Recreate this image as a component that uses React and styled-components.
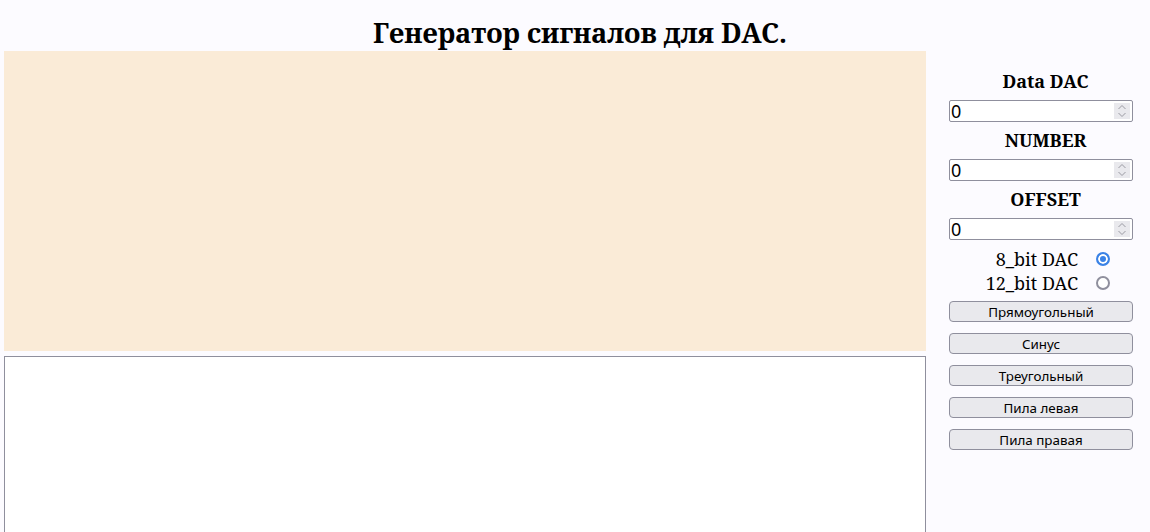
import React, { useState } from 'react';
import styled, { createGlobalStyle } from 'styled-components';

const GlobalStyle = createGlobalStyle`
  html, body {
    margin: 0;
    padding: 0;
    background: #fcfbff;
    font-family: "Noto Serif", "Liberation Serif", serif;
    overflow: hidden;
  }
`;

const Page = styled.div`
  width: 1150px;
  height: 532px;
  display: flex;
  flex-direction: column;
`;

const Title = styled.h1`
  margin: 14px 0 0 10px;
  height: 37px;
  font-size: 27px;
  font-weight: bold;
  line-height: 37px;
  text-align: center;
  color: #000;
`;

const Body = styled.div`
  display: flex;
  align-items: flex-start;
`;

const LeftCol = styled.div`
  width: 922px;
  margin-left: 4px;
  display: flex;
  flex-direction: column;
  gap: 5px;
`;

const Canvas = styled.div`
  height: 300px;
  background: #faebd7;
`;

const Log = styled.textarea`
  box-sizing: border-box;
  width: 922px;
  height: 200px;
  margin: 0;
  border: 1px solid #8f8f9d;
  background: #fff;
  resize: none;
  outline: none;
`;

const Panel = styled.div`
  width: 184px;
  margin-left: 23px;
  padding-top: 18px;
  display: flex;
  flex-direction: column;
`;

const Label = styled.div`
  height: 24px;
  margin-top: ${({ first }) => (first ? '0' : '6px')};
  padding-left: 9px;
  font-size: 18px;
  font-weight: bold;
  line-height: 24px;
  text-align: center;
  color: #000;
`;

const NumberBox = styled.div`
  box-sizing: border-box;
  height: 22px;
  margin-top: 7px;
  display: flex;
  align-items: stretch;
  border: 1px solid #8f8f9d;
  border-radius: 2px;
  background: #fff;
`;

const NumberInput = styled.input`
  flex: 1;
  min-width: 0;
  border: none;
  outline: none;
  padding: 0 0 0 1px;
  font-family: "Noto Sans", sans-serif;
  font-size: 18px;
  color: #000;
  background: transparent;
  -moz-appearance: textfield;
  &::-webkit-inner-spin-button,
  &::-webkit-outer-spin-button {
    -webkit-appearance: none;
    margin: 0;
  }
`;

const Spinner = styled.div`
  width: 16px;
  margin: 2px 2px 2px 0;
  background: #e9e9ed;
  display: flex;
  align-items: center;
  justify-content: center;
`;

const RadioRow = styled.label`
  height: 24px;
  display: flex;
  align-items: center;
  justify-content: flex-end;
  gap: 18px;
  padding-right: 23px;
  margin-top: ${({ first }) => (first ? '7px' : '0')};
  font-size: 18px;
  line-height: 24px;
  color: #000;
`;

const Radio = styled.input`
  appearance: none;
  box-sizing: border-box;
  width: 14px;
  height: 14px;
  margin: 0;
  border: 2px solid #8f8f9d;
  border-radius: 50%;
  background: #fff;

  &:checked {
    border-color: #3a82e6;
    background: #3a82e6;
    box-shadow: inset 0 0 0 2px #fff;
  }
`;

const Buttons = styled.div`
  margin-top: 6px;
  display: flex;
  flex-direction: column;
  gap: 11px;
`;

const Button = styled.button`
  height: 21px;
  padding: 0;
  border: 1px solid #8f8f9d;
  border-radius: 4px;
  background: #e9e9ed;
  font-family: "Noto Sans", sans-serif;
  font-size: 13.4px;
  color: #000;
  cursor: pointer;
`;

const SpinIcon = () => (
  <svg width="10" height="16" viewBox="0 0 10 16" fill="none" stroke="#9a9aa2" strokeWidth="1">
    <path d="M1.5 6 L5 2.5 L8.5 6" />
    <path d="M1.5 10 L5 13.5 L8.5 10" />
  </svg>
);

const NumberField = ({ value, onChange }) => (
  <NumberBox>
    <NumberInput type="number" value={value} onChange={(e) => onChange(e.target.value)} />
    <Spinner>
      <SpinIcon />
    </Spinner>
  </NumberBox>
);

export default function App() {
  const [data, setData] = useState('0');
  const [number, setNumber] = useState('0');
  const [offset, setOffset] = useState('0');
  const [bits, setBits] = useState(8);

  return (
    <Page>
      <GlobalStyle />
      <Title>Генератор сигналов для DAC.</Title>
      <Body>
        <LeftCol>
          <Canvas />
          <Log />
        </LeftCol>
        <Panel>
          <Label first>Data DAC</Label>
          <NumberField value={data} onChange={setData} />
          <Label>NUMBER</Label>
          <NumberField value={number} onChange={setNumber} />
          <Label>OFFSET</Label>
          <NumberField value={offset} onChange={setOffset} />
          <RadioRow first>
            8_bit DAC
            <Radio type="radio" name="dac" checked={bits === 8} onChange={() => setBits(8)} />
          </RadioRow>
          <RadioRow>
            12_bit DAC
            <Radio type="radio" name="dac" checked={bits === 12} onChange={() => setBits(12)} />
          </RadioRow>
          <Buttons>
            <Button>Прямоугольный</Button>
            <Button>Синус</Button>
            <Button>Треугольный</Button>
            <Button>Пила левая</Button>
            <Button>Пила правая</Button>
          </Buttons>
        </Panel>
      </Body>
    </Page>
  );
}
